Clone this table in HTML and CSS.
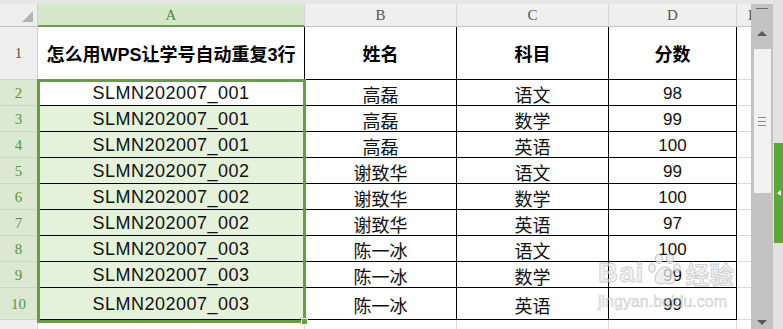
FILE: index.html
```html
<!DOCTYPE html>
<html lang="zh-CN">
<head>
<meta charset="utf-8">
<title>WPS</title>
<link rel="stylesheet" href="styles.css">
</head>
<body>
<div class="app">
  <div class="sheet">
    <div class="topstrip"></div>
    <div class="grid">
      <div class="corner"><span class="corner-tri"></span></div>
      <div class="ch ch-sel">A</div>
      <div class="ch">B</div>
      <div class="ch">C</div>
      <div class="ch">D</div>
      <div class="ch ch-e">E</div>

      <div class="rh">1</div>
      <div class="c head">怎么用WPS让学号自动重复3行</div>
      <div class="c head">姓名</div>
      <div class="c head">科目</div>
      <div class="c head">分数</div>
      <div class="c e"></div>

      <div class="rh rh-sel">2</div>
      <div class="c id active">SLMN202007_001</div>
      <div class="c">高磊</div>
      <div class="c">语文</div>
      <div class="c num">98</div>
      <div class="c e"></div>

      <div class="rh rh-sel">3</div>
      <div class="c id sel">SLMN202007_001</div>
      <div class="c">高磊</div>
      <div class="c">数学</div>
      <div class="c num">99</div>
      <div class="c e"></div>

      <div class="rh rh-sel">4</div>
      <div class="c id sel">SLMN202007_001</div>
      <div class="c">高磊</div>
      <div class="c">英语</div>
      <div class="c num">100</div>
      <div class="c e"></div>

      <div class="rh rh-sel">5</div>
      <div class="c id sel">SLMN202007_002</div>
      <div class="c">谢致华</div>
      <div class="c">语文</div>
      <div class="c num">99</div>
      <div class="c e"></div>

      <div class="rh rh-sel">6</div>
      <div class="c id sel">SLMN202007_002</div>
      <div class="c">谢致华</div>
      <div class="c">数学</div>
      <div class="c num">100</div>
      <div class="c e"></div>

      <div class="rh rh-sel">7</div>
      <div class="c id sel">SLMN202007_002</div>
      <div class="c">谢致华</div>
      <div class="c">英语</div>
      <div class="c num">97</div>
      <div class="c e"></div>

      <div class="rh rh-sel">8</div>
      <div class="c id sel">SLMN202007_003</div>
      <div class="c">陈一冰</div>
      <div class="c">语文</div>
      <div class="c num">100</div>
      <div class="c e"></div>

      <div class="rh rh-sel">9</div>
      <div class="c id sel">SLMN202007_003</div>
      <div class="c">陈一冰</div>
      <div class="c">数学</div>
      <div class="c num">99</div>
      <div class="c e"></div>

      <div class="rh rh-sel">10</div>
      <div class="c id sel">SLMN202007_003</div>
      <div class="c">陈一冰</div>
      <div class="c">英语</div>
      <div class="c num">99</div>
      <div class="c e"></div>

      <div class="rh rh-empty"></div>
      <div class="c blank"></div>
      <div class="c blank"></div>
      <div class="c blank"></div>
      <div class="c blank"></div>
      <div class="c blank e"></div>
    </div>
    <div class="selection"></div>
    <div class="fill-handle"></div>
    <div class="watermark">
      <div class="wm-top">
        <span class="wm-bai">Bai</span>
        <svg class="wm-paw" width="34" height="34" viewBox="0 0 34 34">
          <g fill="rgba(235,235,235,0.75)" stroke="rgba(170,170,170,0.7)" stroke-width="1">
            <ellipse cx="11" cy="6" rx="3.5" ry="4.5"/>
            <ellipse cx="22" cy="6" rx="3.5" ry="4.5"/>
            <ellipse cx="4" cy="15" rx="3.2" ry="4.2"/>
            <ellipse cx="29" cy="15" rx="3.2" ry="4.2"/>
            <path d="M17 14 C11 14 7 22 7 26 C7 31 12 32 17 30 C22 32 27 31 27 26 C27 22 23 14 17 14 Z"/>
          </g>
        </svg>
        <span class="wm-jy">经验</span>
      </div>
      <div class="wm-url">jingyan.baidu.com</div>
    </div>
  </div>
  <div class="vscroll">
    <div class="vs-top"><span class="vs-dash"></span></div>
    <div class="vs-up"></div>
    <div class="vs-thumb"><span class="grip"></span><span class="grip"></span><span class="grip"></span></div>
    <div class="vs-track"></div>
    <div class="vs-down"></div>
  </div>
  <div class="side">
    <div class="side-top"></div>
    <div class="side-green"><span class="side-tri"></span></div>
    <div class="side-rest"></div>
  </div>
</div>
</body>
</html>
```
FILE: styles.css
```css
* { box-sizing: border-box; }
html, body { margin: 0; padding: 0; background: #ffffff; }
body { width: 783px; height: 329px; overflow: hidden; }

.app { display: flex; width: 783px; height: 329px; }

.sheet { position: relative; width: 751px; height: 329px; overflow: hidden; }
.topstrip { height: 4px; background: #e6e6e6; }

.grid {
  display: grid;
  grid-template-columns: 38px 267px 152px 152px 128px 14px;
  grid-template-rows: 23px 53px repeat(8, 26px) 32px 9px;
}

.corner {
  position: relative;
  background: #eeeeee;
  border-right: 1px solid #cfcfcf;
  border-bottom: 1px solid #c4c4c4;
}
.corner-tri {
  position: absolute;
  left: 22px;
  top: 7px;
  width: 0; height: 0;
  border-left: 11px solid transparent;
  border-bottom: 11px solid #b4b4b4;
}

.ch {
  display: flex; align-items: center; justify-content: center;
  background: #efefef;
  border-right: 1px solid #d6d6d6;
  border-bottom: 1px solid #c2c2c2;
  font-family: "Liberation Serif", "DejaVu Serif", serif;
  font-size: 15px;
  color: #555555;
  padding-top: 1px;
}
.ch-sel {
  background: #d5e8ca;
  color: #4f8a36;
  border-bottom: 2px solid #6ba146;
}
.ch-e { justify-content: flex-start; padding-left: 11px; border-right: none; overflow: hidden; }

.rh {
  display: flex; align-items: center; justify-content: center;
  background: #eeeeee;
  border-right: 1px solid #cfcfcf;
  border-bottom: 1px solid #d6d6d6;
  font-family: "Liberation Serif", "DejaVu Serif", serif;
  font-size: 15px;
  color: #555555;
  padding-top: 1px;
}
.rh-sel { background: #dbe8d2; color: #5b9440; border-bottom-color: #c9d9bf; }
.rh-empty { border-bottom: none; }

.c {
  display: flex; align-items: center; justify-content: center;
  border-right: 1px solid #000000;
  border-bottom: 1px solid #000000;
  font-family: "Liberation Sans", "Noto Sans CJK SC", sans-serif;
  font-size: 18px;
  color: #111111;
  white-space: nowrap;
  background: #ffffff;
  padding-top: 2px;
}
.c.head { font-weight: bold; color: #000000; padding-top: 0; }
.c.id { letter-spacing: 0.5px; }
.c.num { font-size: 17px; }
.c.sel { background: #e4f1db; }
.c.e { border-right: none; border-bottom: 1px solid #d9d9d9; }
.c.blank { border-right: 1px solid #dadada; border-bottom: none; }
.c.blank.e { border-right: none; }

.selection {
  position: absolute;
  left: 37px;
  top: 79px;
  width: 269px;
  height: 244px;
  border: 3px solid #6a9c45;
  pointer-events: none;
}
.fill-handle {
  position: absolute;
  left: 301px;
  top: 318px;
  width: 7px;
  height: 7px;
  background: #6a9c45;
  border: 1px solid #ffffff;
}

.watermark {
  position: absolute;
  left: 598px;
  top: 255px;
  width: 150px;
  pointer-events: none;
}
.wm-top { display: flex; align-items: center; height: 36px; }
.wm-bai {
  font-family: "Liberation Sans", sans-serif;
  font-weight: bold;
  font-size: 28px;
  color: rgba(232,232,232,0.6);
  -webkit-text-stroke: 0.8px rgba(165,165,165,0.55);
  letter-spacing: 1px;
}
.wm-paw { margin-left: 3px; margin-top: -6px; }
.wm-jy {
  margin-left: 4px;
  font-family: "Noto Sans CJK SC", sans-serif;
  font-weight: bold;
  font-size: 24px;
  color: rgba(232,232,232,0.6);
  -webkit-text-stroke: 0.8px rgba(165,165,165,0.55);
}
.wm-url {
  margin-top: 2px;
  font-family: "Liberation Sans", sans-serif;
  font-size: 16px;
  color: rgba(225,225,225,0.6);
  -webkit-text-stroke: 0.6px rgba(170,170,170,0.5);
}

.vscroll {
  width: 22px; height: 329px;
  display: flex; flex-direction: column; align-items: center;
  background: #c3c3c3;
}
.vs-top {
  width: 22px; height: 4px;
  background: #e6e6e6;
  flex: none;
}
.vs-dash {
  display: block;
  position: relative;
  top: 8px;
  margin: 0 auto;
  width: 12px; height: 1px;
  background: #6e6e6e;
}
.vs-up {
  margin-top: 27px;
  width: 0; height: 0;
  border-left: 5px solid transparent;
  border-right: 5px solid transparent;
  border-bottom: 5px solid #5a5a5a;
  flex: none;
}
.vs-thumb {
  margin-top: 13px;
  width: 17px; height: 144px;
  background: #f2f2f2;
  display: flex; flex-direction: column; align-items: center; justify-content: center;
  gap: 3px;
  flex: none;
}
.grip { display: block; width: 8px; height: 1px; background: #8a8a8a; }
.vs-track { flex: 1; }
.vs-down {
  margin-bottom: 4px;
  width: 0; height: 0;
  border-left: 5px solid transparent;
  border-right: 5px solid transparent;
  border-top: 5px solid #5a5a5a;
  flex: none;
}

.side {
  width: 10px; height: 329px;
  display: flex; flex-direction: column;
  background: #e2e2e2;
}
.side-top { height: 143px; flex: none; }
.side-green {
  height: 100px; flex: none;
  margin-left: 1px;
  background: #5aa83a;
  display: flex; align-items: center; justify-content: center;
}
.side-tri {
  width: 0; height: 0;
  border-top: 3px solid transparent;
  border-bottom: 3px solid transparent;
  border-right: 4px solid #ffffff;
}
.side-rest { flex: 1; }
```
